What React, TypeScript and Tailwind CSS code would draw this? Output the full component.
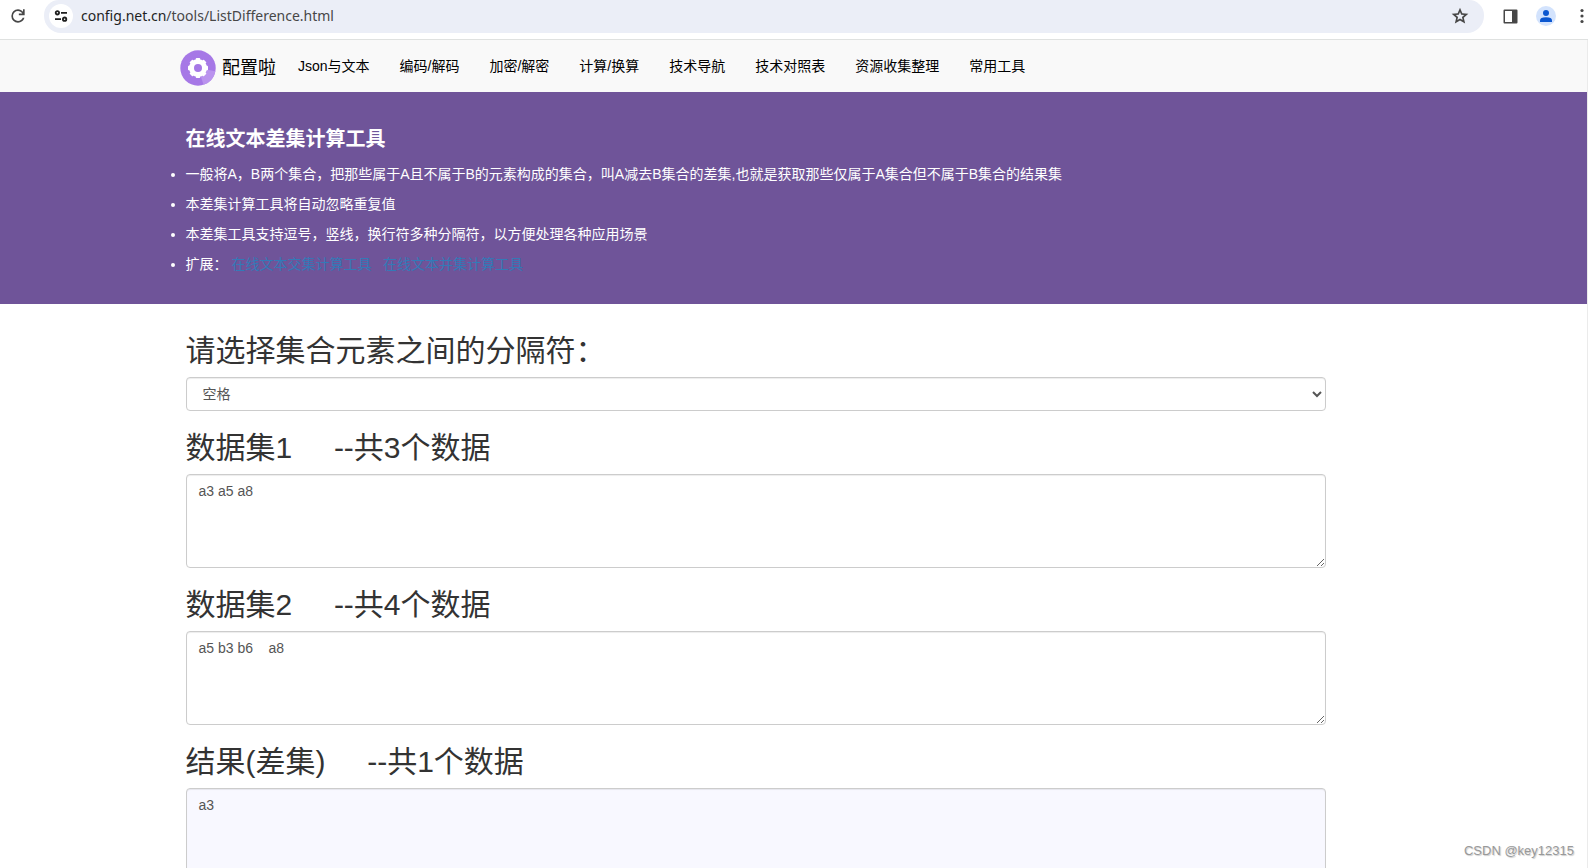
import { useState } from "react";

const NAV_ITEMS = [
  "Json与文本",
  "编码/解码",
  "加密/解密",
  "计算/换算",
  "技术导航",
  "技术对照表",
  "资源收集整理",
  "常用工具",
];

const TIPS = [
  "一般将A，B两个集合，把那些属于A且不属于B的元素构成的集合，叫A减去B集合的差集,也就是获取那些仅属于A集合但不属于B集合的结果集",
  "本差集计算工具将自动忽略重复值",
  "本差集工具支持逗号，竖线，换行符多种分隔符，以方便处理各种应用场景",
];

const SEPARATORS: Record<string, string> = {
  空格: " ",
  逗号: ",",
  竖线: "|",
  换行符: "\n",
};

function split(text: string, separator: string) {
  return [...new Set(text.split(separator).map((s) => s.trim()).filter(Boolean))];
}

function GearLogo() {
  return (
    <svg viewBox="0 0 36 36" className="size-9" aria-hidden="true">
      <circle cx="18" cy="18" r="17.7" fill="#a678e6" />
      <path d="M18 18 35.4 21.2A17.7 17.7 0 0 1 23.6 34.8Z" fill="#ba93ee" />
      <circle cx="18" cy="18" r="9" fill="#fff" />
      {[0, 45, 90, 135].map((angle) => (
        <rect key={angle} x="15.8" y="8" width="4.4" height="20" rx="0.8" fill="#fff" transform={`rotate(${angle} 18 18)`} />
      ))}
      <circle cx="18" cy="18" r="4" fill="#a678e6" />
    </svg>
  );
}

function BrowserBar() {
  return (
    <div className="flex h-10 shrink-0 items-start border-b border-[#dfe1e0] bg-white text-[#474747]">
      <button type="button" aria-label="刷新" className="ml-2 mt-1.5 size-5">
        <svg viewBox="0 0 24 24" className="size-5" fill="currentColor">
          <path d="M12 20q-3.35 0-5.675-2.325T4 12t2.325-5.675T12 4q1.725 0 3.3.713T18 6.75V4h2v7h-7V9h4.2q-.8-1.4-2.187-2.2T12 6Q9.5 6 7.75 7.75T6 12t1.75 4.25T12 18q1.925 0 3.475-1.1T17.65 14h2.1q-.7 2.65-2.85 4.325T12 20" />
        </svg>
      </button>
      <div className="ml-4 flex h-[33px] grow items-start rounded-b-[17px] rounded-t-[15px] bg-[#ebeef7]">
        <button type="button" aria-label="网站信息" className="ml-[5px] mt-1 flex size-6 items-center justify-center rounded-full bg-white">
          <svg viewBox="0 0 14 14" className="size-3.5" fill="none" stroke="#1f1f1f" strokeWidth="1.8">
            <circle cx="3.4" cy="3.8" r="1.7" />
            <path d="M7 3.8H13M1 10.2h6" />
            <circle cx="10.6" cy="10.2" r="1.7" />
          </svg>
        </button>
        <p className="ml-2 grow pt-1 font-['Noto_Sans',sans-serif] text-sm leading-6">
          <span className="text-[#1f1f1f]">config.net.cn</span>/tools/ListDifference.html
        </p>
        <button type="button" aria-label="收藏" className="mr-3.5 mt-1.5 size-5">
          <svg viewBox="0 0 24 24" className="size-5" fill="currentColor">
            <path d="m8.85 16.825 3.15-1.9 3.15 1.925-.825-3.6 2.775-2.4-3.65-.325-1.45-3.4-1.45 3.375-3.65.325 2.775 2.425zM5.825 21l1.625-7.025L2 9.25l7.2-.625L12 2l2.8 6.625 7.2.625-5.45 4.725L18.175 21 12 17.275z" />
          </svg>
        </button>
      </div>
      <div className="-mr-1 ml-4 flex gap-4 pt-1.5">
        <button type="button" aria-label="侧边栏" className="flex size-5 items-center justify-center">
          <svg viewBox="0 0 15 15" className="size-[15px]">
            <path fill="currentColor" fillRule="evenodd" d="M1.5.5h12q1 0 1 1v12q0 1-1 1h-12q-1 0-1-1v-12q0-1 1-1M2 2v11h7V2z" />
          </svg>
        </button>
        <button type="button" aria-label="用户" className="size-5">
          <svg viewBox="0 0 20 20" className="size-5">
            <circle cx="10" cy="10" r="10" fill="#d3e3fd" />
            <circle cx="10" cy="7" r="3" fill="#0b57d0" />
            <path d="M4 16v-1.5Q4 11.2 10 11.2t6 3.3V16z" fill="#0b57d0" />
          </svg>
        </button>
        <button type="button" aria-label="更多" className="size-5">
          <svg viewBox="0 0 20 20" className="size-5" fill="currentColor">
            <circle cx="10" cy="4.5" r="1.6" />
            <circle cx="10" cy="10" r="1.6" />
            <circle cx="10" cy="15.5" r="1.6" />
          </svg>
        </button>
      </div>
    </div>
  );
}

const FIELD =
  "block w-full rounded border border-[#ccc] px-3 py-1.5 text-sm leading-5 text-[#555] shadow-[inset_0_1px_1px_rgba(0,0,0,0.075)]";

type DataFieldProps = {
  id: string;
  title: string;
  count: number;
  value: string;
  onChange?: (value: string) => void;
};

function DataField({ id, title, count, value, onChange }: DataFieldProps) {
  return (
    <div className="mt-5">
      <h2 className="mb-2.5 text-3xl leading-[33px]">
        <label htmlFor={id} className="whitespace-pre">
          {title}
          {"     "}--共{count}个数据
        </label>
      </h2>
      <textarea
        id={id}
        rows={4}
        value={value}
        readOnly={!onChange}
        onChange={(e) => onChange?.(e.target.value)}
        className={`${FIELD} ${onChange ? "bg-white" : "bg-[#f8f8ff]"}`}
      />
    </div>
  );
}

export default function App() {
  const [separator, setSeparator] = useState("空格");
  const [first, setFirst] = useState("a3 a5 a8");
  const [second, setSecond] = useState("a5 b3 b6    a8");

  const a = split(first, SEPARATORS[separator]);
  const b = split(second, SEPARATORS[separator]);
  const result = a.filter((item) => !b.includes(item));

  return (
    <div className="relative flex h-screen flex-col overflow-hidden bg-white font-['Liberation_Sans','Noto_Sans_CJK_SC',sans-serif] text-sm text-[#333]">
      <BrowserBar />
      <div className="min-h-0 grow overflow-hidden border-r border-[#ebebeb]">
        <header className="bg-[#f9f9f9] pr-[75px]">
          <div className="mx-auto flex h-[52px] max-w-[1140px] items-center text-black">
            <a href="#" className="-ml-1.5 flex items-center gap-1.5 pt-[3px] text-lg">
              <GearLogo />
              配置啦
            </a>
            <nav className="ml-[22px] flex gap-[30px]">
              {NAV_ITEMS.map((item) => (
                <a key={item} href="#">
                  {item}
                </a>
              ))}
            </nav>
          </div>
        </header>

        <section className="bg-[#6f5499] pb-[25px] pr-[76px] pt-9 text-white">
          <div className="mx-auto max-w-[1140px]">
            <h1 className="mb-[9px] text-xl font-bold leading-[22px]">在线文本差集计算工具</h1>
            <ul className="list-disc leading-[30px]">
              {TIPS.map((tip) => (
                <li key={tip}>{tip}</li>
              ))}
              <li className="whitespace-pre">
                扩展： <a href="#" className="text-[#337ab7]">在线文本交集计算工具</a>
                {"   "}
                <a href="#" className="text-[#337ab7]">在线文本并集计算工具</a>
              </li>
            </ul>
          </div>
        </section>

        <main className="pr-[76px] pt-[30px]">
          <div className="mx-auto max-w-[1140px]">
            <h2 className="mb-2.5 text-3xl leading-[33px]">
              <label htmlFor="separator">请选择集合元素之间的分隔符：</label>
            </h2>
            <select
              id="separator"
              value={separator}
              onChange={(e) => setSeparator(e.target.value)}
              className={`${FIELD} h-[34px] bg-white`}
            >
              {Object.keys(SEPARATORS).map((name) => (
                <option key={name}>{name}</option>
              ))}
            </select>
            <DataField id="first" title="数据集1" count={a.length} value={first} onChange={setFirst} />
            <DataField id="second" title="数据集2" count={b.length} value={second} onChange={setSecond} />
            <DataField id="result" title="结果(差集)" count={result.length} value={result.join(SEPARATORS[separator])} />
          </div>
        </main>
      </div>
      <p className="absolute bottom-[7px] right-3.5 text-[13px] leading-5 text-[#999] [text-shadow:1px_1px_1px_#ccc]">
        CSDN @key12315
      </p>
    </div>
  );
}
